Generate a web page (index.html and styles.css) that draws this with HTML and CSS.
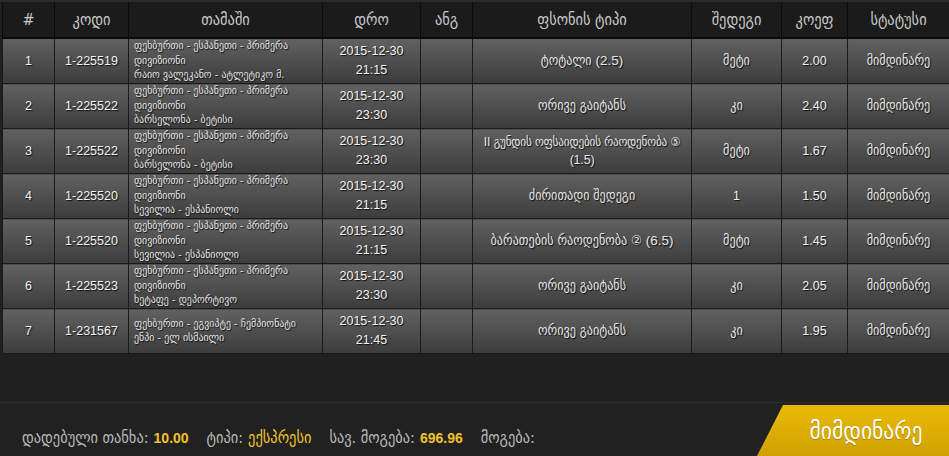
FILE: index.html
```html
<!DOCTYPE html>
<html lang="ka">
<head>
<meta charset="utf-8">
<title>ბილეთი</title>
<link rel="stylesheet" href="styles.css">
</head>
<body>
<div class="page">
  <div class="table-wrap">
    <table class="bets">
      <colgroup>
        <col class="c-num"><col class="c-code"><col class="c-game"><col class="c-date"><col class="c-ang"><col class="c-type"><col class="c-res"><col class="c-odd"><col class="c-status">
      </colgroup>
      <thead>
        <tr>
          <th>#</th><th>კოდი</th><th>თამაში</th><th>დრო</th><th>ანგ</th><th>ფსონის ტიპი</th><th>შედეგი</th><th>კოეფ</th><th>სტატუსი</th>
        </tr>
      </thead>
      <tbody>
        <tr>
          <td class="num">1</td><td class="num">1-225519</td>
          <td class="game">ფეხბურთი - ესპანეთი - პრიმერა<br>დივიზიონი<br>რაიო ვალეკანო - ატლეტიკო მ.</td>
          <td class="num">2015-12-30<br>21:15</td><td></td>
          <td class="geo">ტოტალი (2.5)</td><td class="geo">მეტი</td><td class="num">2.00</td><td class="geo">მიმდინარე</td>
        </tr>
        <tr>
          <td class="num">2</td><td class="num">1-225522</td>
          <td class="game">ფეხბურთი - ესპანეთი - პრიმერა<br>დივიზიონი<br>ბარსელონა - ბეტისი</td>
          <td class="num">2015-12-30<br>23:30</td><td></td>
          <td class="geo">ორივე გაიტანს</td><td class="geo">კი</td><td class="num">2.40</td><td class="geo">მიმდინარე</td>
        </tr>
        <tr>
          <td class="num">3</td><td class="num">1-225522</td>
          <td class="game">ფეხბურთი - ესპანეთი - პრიმერა<br>დივიზიონი<br>ბარსელონა - ბეტისი</td>
          <td class="num">2015-12-30<br>23:30</td><td></td>
          <td class="geo long">II გუნდის ოფსაიდების რაოდენობა ⑤<br>(1.5)</td><td class="geo">მეტი</td><td class="num">1.67</td><td class="geo">მიმდინარე</td>
        </tr>
        <tr>
          <td class="num">4</td><td class="num">1-225520</td>
          <td class="game">ფეხბურთი - ესპანეთი - პრიმერა<br>დივიზიონი<br>სევილია - ესპანიოლი</td>
          <td class="num">2015-12-30<br>21:15</td><td></td>
          <td class="geo">ძირითადი შედეგი</td><td class="num">1</td><td class="num">1.50</td><td class="geo">მიმდინარე</td>
        </tr>
        <tr>
          <td class="num">5</td><td class="num">1-225520</td>
          <td class="game">ფეხბურთი - ესპანეთი - პრიმერა<br>დივიზიონი<br>სევილია - ესპანიოლი</td>
          <td class="num">2015-12-30<br>21:15</td><td></td>
          <td class="geo">ბარათების რაოდენობა ② (6.5)</td><td class="geo">მეტი</td><td class="num">1.45</td><td class="geo">მიმდინარე</td>
        </tr>
        <tr>
          <td class="num">6</td><td class="num">1-225523</td>
          <td class="game">ფეხბურთი - ესპანეთი - პრიმერა<br>დივიზიონი<br>ხეტაფე - დეპორტივო</td>
          <td class="num">2015-12-30<br>23:30</td><td></td>
          <td class="geo">ორივე გაიტანს</td><td class="geo">კი</td><td class="num">2.05</td><td class="geo">მიმდინარე</td>
        </tr>
        <tr>
          <td class="num">7</td><td class="num">1-231567</td>
          <td class="game">ფეხბურთი - ეგვიპტე - ჩემპიონატი<br>ენპი - ელ ისმაილი</td>
          <td class="num">2015-12-30<br>21:45</td><td></td>
          <td class="geo">ორივე გაიტანს</td><td class="geo">კი</td><td class="num">1.95</td><td class="geo">მიმდინარე</td>
        </tr>
      </tbody>
    </table>
  </div>
  <div class="spacer"></div>
  <div class="footer">
    <div class="summary">
      <span class="label">დადებული თანხა:</span><span class="value">10.00</span>
      <span class="label gap">ტიპი:</span><span class="value geo-val">ექსპრესი</span>
      <span class="label gap">სავ. მოგება:</span><span class="value">696.96</span>
      <span class="label gap">მოგება:</span>
    </div>
    <div class="status-btn">მიმდინარე</div>
  </div>
</div>
</body>
</html>
```
FILE: styles.css
```css
html, body {
  margin: 0;
  padding: 0;
  background: #202020;
}
body {
  width: 949px;
  height: 456px;
  overflow: hidden;
  font-family: "Liberation Sans", "DejaVu Sans Condensed", "DejaVu Sans", sans-serif;
}
.page {
  display: flex;
  flex-direction: column;
  height: 456px;
}
.table-wrap {
  padding-left: 2px;
  border-top: 2px solid #2b2b2b;
  background: #202020;
}
.bets {
  width: 947px;
  table-layout: fixed;
  border-collapse: collapse;
}
.c-num { width: 52px; }
.c-code { width: 74px; }
.c-game { width: 194px; }
.c-date { width: 98px; }
.c-ang { width: 52px; }
.c-type { width: 219px; }
.c-res { width: 90px; }
.c-odd { width: 66px; }
.c-status { width: 102px; }

.bets th {
  height: 35px;
  padding: 0;
  background: #1b1b1b;
  color: #c9c9c9;
  font-family: "DejaVu Sans Condensed", sans-serif;
  font-weight: normal;
  font-size: 16px;
  text-align: center;
  border-left: 1px solid #0c0c0c;
  border-right: 1px solid #0c0c0c;
  border-bottom: 2px solid #0a0a0a;
}
.bets td {
  height: 44px;
  padding: 0 4px;
  background: linear-gradient(#616161, #3c3c3c);
  border: 1px solid #1a1a1a;
  border-top: 1px solid #262626;
  text-align: center;
  vertical-align: middle;
  color: #eeeeee;
  text-shadow: 1px 1px 1px #111;
}
.bets td.num {
  font-family: "Liberation Sans", sans-serif;
  font-size: 12.5px;
  line-height: 19px;
  color: #f4f4f4;
}
.bets td.geo {
  font-family: "Liberation Sans", "DejaVu Sans Condensed", sans-serif;
  font-size: 13.5px;
  line-height: 18px;
  color: #e6e6e6;
  white-space: nowrap;
}
.bets td.geo.long {
  font-size: 12.5px;
  letter-spacing: -0.2px;
  padding: 0 2px;
}
.bets td.game {
  text-align: left;
  padding-left: 5px;
  white-space: nowrap;
  overflow: hidden;
  font-family: "DejaVu Sans Condensed", sans-serif;
  font-size: 11px;
  line-height: 14.5px;
  color: #e4e4e4;
}
.spacer {
  flex: 1;
}
.footer {
  height: 53px;
  border-top: 1px solid #2c2c2c;
  background: #212121;
  display: flex;
  align-items: flex-end;
  justify-content: space-between;
}
.summary {
  align-self: center;
  padding-left: 22px;
  padding-top: 16px;
  display: flex;
  align-items: baseline;
  white-space: nowrap;
}
.label {
  color: #b9b9b9;
  font-family: "DejaVu Sans Condensed", sans-serif;
  font-size: 16px;
  margin-right: 5px;
}
.label.gap {
  margin-left: 18px;
}
.value {
  color: #f2c230;
  font-family: "Liberation Sans", sans-serif;
  font-weight: bold;
  font-size: 14px;
}
.value.geo-val {
  font-family: "DejaVu Sans Condensed", sans-serif;
  font-weight: normal;
  font-size: 16px;
}
.status-btn {
  width: 192px;
  height: 51px;
  box-sizing: border-box;
  padding-left: 26px;
  display: flex;
  align-items: center;
  justify-content: center;
  clip-path: polygon(26px 0, 100% 0, 100% 100%, 0 100%);
  background: linear-gradient(#e9bb06, #cfa102);
  color: #ffffff;
  font-family: "DejaVu Sans Condensed", sans-serif;
  font-size: 24px;
  text-shadow: 0 1px 1px rgba(0,0,0,0.25);
}
```
